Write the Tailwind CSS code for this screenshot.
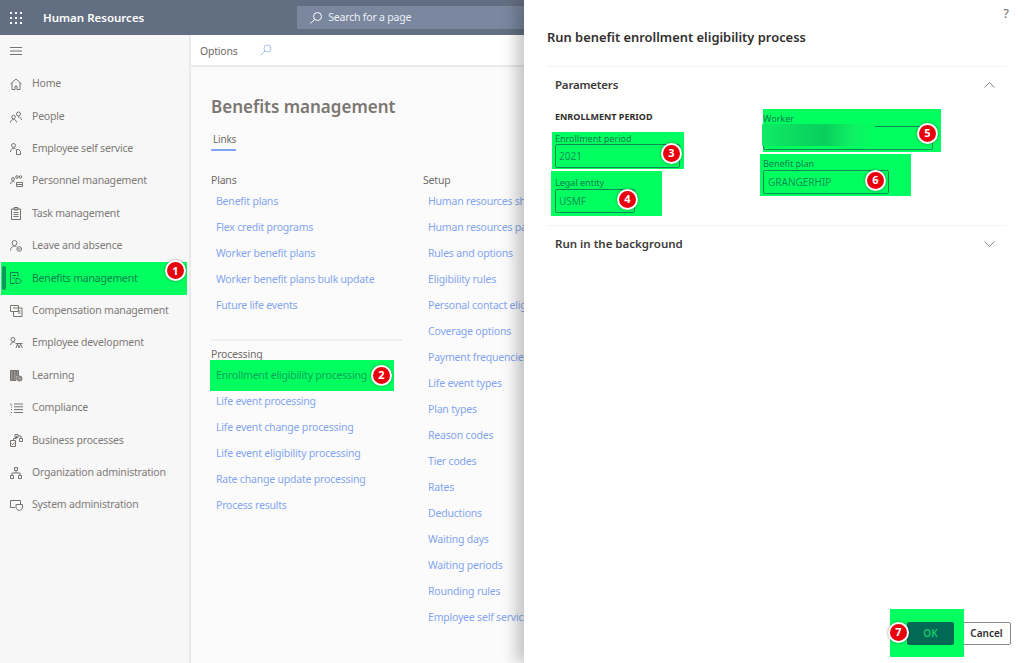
<!DOCTYPE html>
<html lang="en">
<head>
  <meta charset="UTF-8" />
  <title>Benefits management</title>
  <script src="https://cdn.jsdelivr.net/npm/@tailwindcss/browser@4"></script>
</head>
<body class="relative h-[663px] w-[1024px] overflow-hidden bg-white font-['Noto_Sans','Open_Sans',sans-serif] text-[10.5px] tracking-[-0.2px] text-[#6f6b68]">

  <!-- Top bar -->
  <header class="flex h-[35px] items-center bg-[#626f82] text-white">
    <svg class="ml-[10px] h-[12px] w-[12px]" viewBox="0 0 12 12" fill="#fff">
      <rect x="0" y="0" width="2" height="2"/><rect x="5" y="0" width="2" height="2"/><rect x="10" y="0" width="2" height="2"/>
      <rect x="0" y="5" width="2" height="2"/><rect x="5" y="5" width="2" height="2"/><rect x="10" y="5" width="2" height="2"/>
      <rect x="0" y="10" width="2" height="2"/><rect x="5" y="10" width="2" height="2"/><rect x="10" y="10" width="2" height="2"/>
    </svg>
    <span class="ml-[21px] text-[11.5px] font-semibold tracking-normal">Human Resources</span>
    <div class="ml-[153px] flex h-[23px] w-[240px] items-center rounded-[1px] bg-[#7a879f] pl-[12px] text-[#eef0f5]">
      <svg class="h-[14px] w-[14px]" viewBox="0 0 14 14" fill="none" stroke="#fff" stroke-width="1"><circle cx="8.500" cy="5.500" r="4"/><path d="M5.600 8.400 1.500 12.500"/></svg>
      <span class="ml-[5px]">Search for a page</span>
    </div>
  </header>

  <div class="flex h-[628px]">
    <!-- Left navigation -->
    <nav class="w-[191px] shrink-0 border-r-2 border-[#eaeaea] bg-[#f7f7f7] text-[#7d7a78]">
      <div class="flex h-[32px] items-center pl-[10px]">
        <svg class="h-[10px] w-[12px]" viewBox="0 0 12 10" stroke="#77736f" stroke-width="1"><path d="M0 1.500h12M0 5h12M0 8.500h12"/></svg>
      </div>
      <ul class="pt-[1px]">
        <li class="flex h-[32.400px] items-center pl-[10px]">
          <svg class="h-[12px] w-[12px]" viewBox="0 0 12 12" fill="none" stroke="#77736f"><path d="M.5 6 6 1l5.500 5M2 5v6.500h3V8h2v3.500h3V5"/></svg>
          <span class="ml-[10px]">Home</span>
        </li>
        <li class="flex h-[32.400px] items-center pl-[10px]">
          <svg class="h-[12px] w-[12px]" viewBox="0 0 12 12" fill="none" stroke="#77736f"><circle cx="8.500" cy="3" r="2"/><circle cx="3.500" cy="6" r="1.800"/><path d="M.5 11.500c0-4 6-4 6 0M8 6c2 0 3.500 1 3.500 3"/></svg>
          <span class="ml-[10px]">People</span>
        </li>
        <li class="flex h-[32.400px] items-center pl-[10px]">
          <svg class="h-[12px] w-[12px]" viewBox="0 0 12 12" fill="none" stroke="#77736f"><circle cx="3.500" cy="2.500" r="2"/><path d="M.5 9c0-3 3-4.500 5-3.500M6.500 6.500h2l2 2v3h-4z"/></svg>
          <span class="ml-[10px]">Employee self service</span>
        </li>
        <li class="flex h-[32.400px] items-center pl-[10px]">
          <svg class="h-[12px] w-[13px]" viewBox="0 0 13 12" fill="none" stroke="#77736f"><circle cx="3" cy="4" r="1.500"/><circle cx="7" cy="2" r="1.300"/><circle cx="10.500" cy="2" r="1.300"/><path d="M.5 9c0-2.500 3-3 4-2M6.500 7.500h6v4h-6zM6.500 9.500h6"/></svg>
          <span class="ml-[9px]">Personnel management</span>
        </li>
        <li class="flex h-[32.400px] items-center pl-[10px]">
          <svg class="h-[13px] w-[12px]" viewBox="0 0 12 13" fill="none" stroke="#77736f"><path d="M1.500 2h9v10.500h-9zM4 .5h4v2.500H4zM3.500 5.500h5M3.500 7.500h5M3.500 9.500h5"/></svg>
          <span class="ml-[10px]">Task management</span>
        </li>
        <li class="flex h-[32.400px] items-center pl-[10px]">
          <svg class="h-[12px] w-[12px]" viewBox="0 0 12 12" fill="none" stroke="#77736f"><circle cx="4.500" cy="3" r="2.500"/><path d="M.5 10.500c0-3.500 3-5 6-4"/><circle cx="9.200" cy="9" r="2.300"/><path d="M8 9h2.400"/></svg>
          <span class="ml-[10px]">Leave and absence</span>
        </li>
        <li class="relative ml-[1px] mr-[2px] flex h-[32.400px] items-center bg-[#00ff5f] pl-[9px] text-[#07824f]">
          <span class="absolute left-[1px] top-[4px] h-[24px] w-[4px] rounded-[2px] bg-[#06995a]"></span>
          <svg class="h-[13px] w-[12px]" viewBox="0 0 12 13" fill="none" stroke="#07824f"><path d="M8 5V.5H.5v11H5M2.500 3.500h3.500M2.500 6h2.500M6 6.500h3l2.500 2.500L9 11.500H6z"/></svg>
          <span class="ml-[10px]">Benefits management</span>
          <span class="absolute right-[1px] top-[-2px] flex h-[21px] w-[21px] items-center justify-center rounded-full border-2 border-white bg-[#e8000f] text-[11px] font-bold tracking-normal text-white shadow-[0_0_3px_rgba(0,0,0,0.4)]">1</span>
        </li>
        <li class="flex h-[32.400px] items-center pl-[10px]">
          <svg class="h-[12px] w-[13px]" viewBox="0 0 13 12" fill="none" stroke="#77736f"><path d="M.5.5h8v6h-8zM6 3h6v8.500H3.500V6.500M3 3h3M8 6h2.500M8 8h2.500"/></svg>
          <span class="ml-[9px]">Compensation management</span>
        </li>
        <li class="flex h-[32.400px] items-center pl-[10px]">
          <svg class="h-[12px] w-[13px]" viewBox="0 0 13 12" fill="none" stroke="#77736f"><circle cx="3" cy="2.500" r="2"/><path d="M.5 8c0-2.500 3-3.500 4.500-2.500M5.500 6.500h7M6 11l1.500-4M9 11 7.500 7M9 11l1.500-4M12.500 11 10.500 7"/></svg>
          <span class="ml-[9px]">Employee development</span>
        </li>
        <li class="flex h-[32.400px] items-center pl-[10px]">
          <svg class="h-[12px] w-[13px]" viewBox="0 0 13 12" fill="#9b9895" stroke="#77736f"><path d="M.5.500h2.500v10H.5zM3.500.500H6v10H3.500z"/><path d="M6.500.500h2v5h-2z"/><circle cx="9.500" cy="8.500" r="2.500"/></svg>
          <span class="ml-[9px]">Learning</span>
        </li>
        <li class="flex h-[32.400px] items-center pl-[10px]">
          <svg class="h-[11px] w-[13px]" viewBox="0 0 13 11" fill="none" stroke="#77736f"><path d="M4 1h9M4 3.800h9M4 6.600h9M4 9.500h9M1 .5v2M1 4h1M1 6.500h1M1 9.500h1"/></svg>
          <span class="ml-[9px]">Compliance</span>
        </li>
        <li class="flex h-[32.400px] items-center pl-[10px]">
          <svg class="h-[13px] w-[13px]" viewBox="0 0 13 13" fill="none" stroke="#77736f"><path d="M5 .5h3v3H5zM.5 6.500h5v6h-5zM9.500 4.500h3v3h-3zM6.500 2v2.500h-3v2M8 2h3v2.500M1.500 9.500l1.200 1.200 2-2.200"/></svg>
          <span class="ml-[9px]">Business processes</span>
        </li>
        <li class="flex h-[32.400px] items-center pl-[10px]">
          <svg class="h-[12px] w-[12px]" viewBox="0 0 12 12" fill="none" stroke="#77736f"><path d="M4.500.5h3v3h-3zM.5 8.500h3v3h-3zM8.500 8.500h3v3h-3zM6 3.500v2.500M2 8.500V6h8v2.500"/></svg>
          <span class="ml-[10px]">Organization administration</span>
        </li>
        <li class="flex h-[32.400px] items-center pl-[10px]">
          <svg class="h-[12px] w-[13px]" viewBox="0 0 13 12" fill="none" stroke="#77736f"><path d="M5 8.500H.5v-7h10V5"/><path d="M6 5.500h6.500v2.500c0 2-1.500 3-3.200 3.500C7.500 11 6 10 6 8z"/></svg>
          <span class="ml-[9px]">System administration</span>
        </li>
      </ul>
    </nav>

    <!-- Workspace behind the panel -->
    <main class="min-w-0 flex-1 bg-[#fbfbfb]">
      <div class="flex h-[32px] items-center border-b-2 border-[#eaeaea] bg-white pl-[9px] pt-[3px] text-[#6f6b68]">
        <span>Options</span>
        <svg class="ml-[22px] -mt-[4px] h-[12px] w-[12px]" viewBox="0 0 12 12" fill="none" stroke="#a8bcf0"><circle cx="7.500" cy="4.500" r="3.500"/><path d="M5 7 .8 11.200"/></svg>
      </div>
      <div class="pl-[20px]">
        <h1 class="mt-[27px] text-[17px] leading-[26px] font-semibold tracking-normal text-[#7b7672]">Benefits management</h1>
        <div class="mt-[12px] w-[25px] border-b-2 border-[#80a4f6] pb-[3px] pl-[2px] text-[10px] leading-[14px] text-[#6f6b68]">Links</div>
        <div class="mt-[23px] flex">
          <section class="w-[212px]">
            <h2 class="h-[13px] leading-[13px]">Plans</h2>
            <ul class="mt-[2px] pl-[5px] text-[#83a5f0]">
              <li class="flex h-[26px] items-center">Benefit plans</li>
              <li class="flex h-[26px] items-center">Flex credit programs</li>
              <li class="flex h-[26px] items-center">Worker benefit plans</li>
              <li class="flex h-[26px] items-center">Worker benefit plans bulk update</li>
              <li class="flex h-[26px] items-center">Future life events</li>
            </ul>
            <div class="mt-[20px] mr-[21px] border-t-2 border-[#eeeeee]"></div>
            <h2 class="mt-[7px] h-[12px] leading-[13px]">Processing</h2>
            <ul class="text-[#83a5f0]">
              <li class="relative -mb-[2px] -ml-[1px] flex h-[31px] w-[184px] items-center bg-[#00ff5f] pl-[6px] text-[#07a35b]">
                Enrollment eligibility processing
                <span class="absolute right-[2px] top-[5px] flex h-[21px] w-[21px] items-center justify-center rounded-full border-2 border-white bg-[#e8000f] text-[11px] font-bold tracking-normal text-white shadow-[0_0_3px_rgba(0,0,0,0.4)]">2</span>
              </li>
              <li class="flex h-[26px] items-center pl-[5px]">Life event processing</li>
              <li class="flex h-[26px] items-center pl-[5px]">Life event change processing</li>
              <li class="flex h-[26px] items-center pl-[5px]">Life event eligibility processing</li>
              <li class="flex h-[26px] items-center pl-[5px]">Rate change update processing</li>
              <li class="flex h-[26px] items-center pl-[5px]">Process results</li>
            </ul>
          </section>
          <section class="whitespace-nowrap">
            <h2 class="h-[13px] leading-[13px]">Setup</h2>
            <ul class="mt-[2px] pl-[5px] text-[#83a5f0]">
              <li class="flex h-[26px] items-center">Human resources shared parameters</li>
              <li class="flex h-[26px] items-center">Human resources parameters</li>
              <li class="flex h-[26px] items-center">Rules and options</li>
              <li class="flex h-[26px] items-center">Eligibility rules</li>
              <li class="flex h-[26px] items-center">Personal contact eligibility</li>
              <li class="flex h-[26px] items-center">Coverage options</li>
              <li class="flex h-[26px] items-center">Payment frequencies</li>
              <li class="flex h-[26px] items-center">Life event types</li>
              <li class="flex h-[26px] items-center">Plan types</li>
              <li class="flex h-[26px] items-center">Reason codes</li>
              <li class="flex h-[26px] items-center">Tier codes</li>
              <li class="flex h-[26px] items-center">Rates</li>
              <li class="flex h-[26px] items-center">Deductions</li>
              <li class="flex h-[26px] items-center">Waiting days</li>
              <li class="flex h-[26px] items-center">Waiting periods</li>
              <li class="flex h-[26px] items-center">Rounding rules</li>
              <li class="flex h-[26px] items-center">Employee self service</li>
            </ul>
          </section>
        </div>
      </div>
    </main>
  </div>

  <!-- Slide-in dialog over the page -->
  <aside class="absolute inset-y-0 right-0 flex w-[500px] flex-col bg-white pl-[23px] pr-[17px] tracking-normal text-[#32302e] shadow-[-8px_0_14px_rgba(0,0,0,0.22)]">
    <div class="-mr-[2px] flex h-[26px] justify-end pt-[5px] text-[13px] leading-[16px] text-[#6f6b68]"><span>?</span></div>
    <h1 class="mt-[1px] text-[12.900px] leading-[20px] font-semibold text-[#32302e]">Run benefit enrollment eligibility process</h1>
    <section class="mt-[19px] h-[160px] border-y border-[#f3f3f3] pl-[8px]">
      <div class="flex h-[36px] items-center justify-between pr-[12px]">
        <h2 class="text-[11.500px] font-semibold tracking-[-0.2px] text-[#3c3a38]">Parameters</h2>
        <svg class="h-[6px] w-[11px]" viewBox="0 0 11 6" fill="none" stroke="#8a8684"><path d="M.5 5.500 5.500.5l5 5"/></svg>
      </div>
      <div class="flex">
        <div class="w-[208px]">
          <h3 class="mt-[7px] text-[9px] leading-[14px] font-bold text-[#32302e]">ENROLLMENT PERIOD</h3>
          <div class="relative -ml-[3px] mt-[8px] h-[37px] w-[132px] bg-[#00ff5f] pl-[3px] pt-[2px] text-[#0a7a50]">
            <div class="text-[9px] leading-[10px]">Enrollment period</div>
            <div class="flex h-[24px] w-[125px] items-center rounded-[2px] border border-[#0a8a55] pl-[3px] text-[10px] leading-[12px] text-[#0a8f58]">2021</div>
            <span class="absolute right-[2px] top-[11px] flex h-[21px] w-[21px] items-center justify-center rounded-full border-2 border-white bg-[#e8000f] text-[11px] font-bold text-white shadow-[0_0_3px_rgba(0,0,0,0.4)]">3</span>
          </div>
          <div class="relative -ml-[4px] mt-[2px] h-[45px] w-[111px] bg-[#00ff5f] pl-[4px] pt-[7px] text-[#0a7a50]">
            <div class="text-[9px] leading-[10px]">Legal entity</div>
            <div class="mt-[1px] flex h-[24px] w-[80px] items-center rounded-[2px] border border-[#0a8a55] pl-[3px] text-[10px] leading-[12px] text-[#0a8f58]">USMF</div>
            <span class="absolute left-[66px] top-[18px] flex h-[21px] w-[21px] items-center justify-center rounded-full border-2 border-white bg-[#e8000f] text-[11px] font-bold text-white shadow-[0_0_3px_rgba(0,0,0,0.4)]">4</span>
          </div>
        </div>
        <div>
          <div class="relative mt-[6px] h-[43px] w-[178px] bg-[#00ff5f] pt-[5px] text-[#0a7a50]">
            <div class="text-[9px] leading-[10px]">Worker</div>
            <div class="mt-[2px] h-[24px] w-[170px] rounded-[2px] border border-[#0a8a55]"></div>
            <!-- blurred-out name -->
            <div class="absolute left-[-1px] top-[15px] h-[22px] w-[113px] rounded-[1px] bg-[linear-gradient(90deg,#10ea66,#08cf5c_55%,#10f064_80%,#00ff5f)]"></div>
            <span class="absolute right-[3px] top-[14px] flex h-[21px] w-[21px] items-center justify-center rounded-full border-2 border-white bg-[#e8000f] text-[11px] font-bold text-white shadow-[0_0_3px_rgba(0,0,0,0.4)]">5</span>
          </div>
          <div class="relative -ml-[3px] mt-[2px] h-[42px] w-[151px] bg-[#00ff5f] pl-[3px] pt-[5px] text-[#0a7a50]">
            <div class="text-[9px] leading-[10px]">Benefit plan</div>
            <div class="mt-[1px] flex h-[24px] w-[126px] items-center rounded-[2px] border border-[#0a8a55] pl-[4px] text-[10px] leading-[12px] text-[#0a8f58]">GRANGERHIP</div>
            <span class="absolute left-[105px] top-[16px] flex h-[21px] w-[21px] items-center justify-center rounded-full border-2 border-white bg-[#e8000f] text-[11px] font-bold text-white shadow-[0_0_3px_rgba(0,0,0,0.4)]">6</span>
          </div>
        </div>
      </div>
    </section>
    <div class="flex h-[36px] items-center justify-between pl-[8px] pr-[12px]">
      <h2 class="text-[11.500px] font-semibold text-[#3c3a38]">Run in the background</h2>
      <svg class="h-[6px] w-[11px]" viewBox="0 0 11 6" fill="none" stroke="#8a8684"><path d="M.5.5l5 5 5-5"/></svg>
    </div>
    <div class="mt-auto mb-[6px] mr-[-4px] flex items-center justify-end">
      <div class="relative flex h-[48px] w-[74px] items-center justify-end bg-[#00ff5f] pr-[10px]">
        <button class="h-[23px] w-[47px] rounded-[2px] bg-[#006a55] text-[10px] font-semibold text-[#16c96a]">OK</button>
        <span class="absolute left-[-2px] top-[13px] flex h-[21px] w-[21px] items-center justify-center rounded-full border-2 border-white bg-[#e8000f] text-[11px] font-bold text-white shadow-[0_0_3px_rgba(0,0,0,0.4)]">7</span>
      </div>
      <button class="-ml-[2px] h-[23px] w-[49px] rounded-[2px] border border-[#8a8a8a] bg-white text-[10px] font-semibold text-[#32302e]">Cancel</button>
    </div>
  </aside>
</body>
</html>
